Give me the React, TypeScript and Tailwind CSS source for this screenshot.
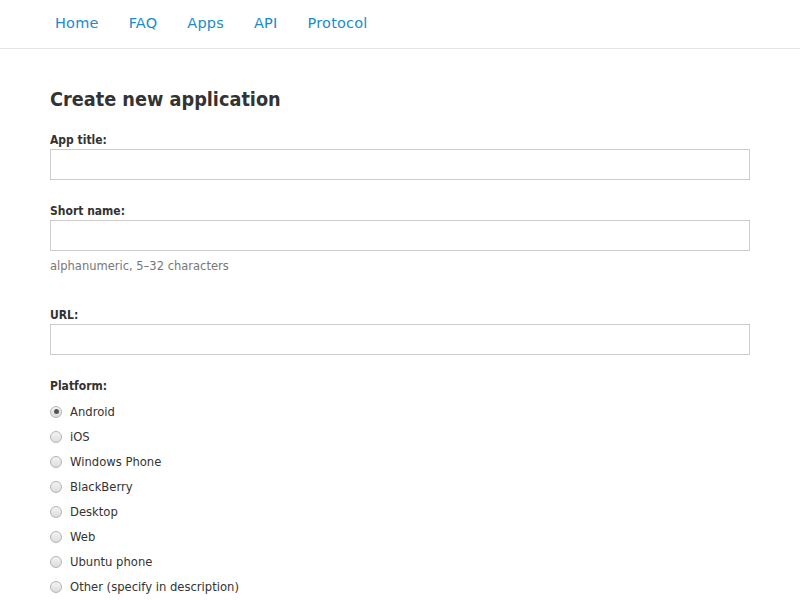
import React from "react";

const platforms = [
  "Android",
  "iOS",
  "Windows Phone",
  "BlackBerry",
  "Desktop",
  "Web",
  "Ubuntu phone",
  "Other (specify in description)",
];

function Radio({ checked }: { checked: boolean }) {
  return (
    <span className="flex h-[12px] w-[12px] shrink-0 items-center justify-center rounded-full border border-[#b4b4b4] bg-gradient-to-b from-[#f4f4f4] to-[#dcdcdc]">
      {checked && <span className="h-[5px] w-[5px] rounded-full bg-[#555]" />}
    </span>
  );
}

const boldCond = "font-bold font-stretch-condensed";

export default function App() {
  return (
    <div className="min-h-[600px] bg-white text-[#333]" style={{ fontFamily: '"DejaVu Sans", Verdana, sans-serif' }}>
      <nav className="flex h-[49px] items-center border-b border-[#e5e5e5] pl-[40px]">
        {["Home", "FAQ", "Apps", "API", "Protocol"].map((l) => (
          <a key={l} className="px-[15px] text-[14.5px] tracking-[0.2px] text-[#1a8bcb]">
            {l}
          </a>
        ))}
      </nav>
      <main className="w-[700px] pl-[50px] box-content">
        <h1 className={`mt-[39px] text-[19.7px] leading-[24px] text-[#333] ${boldCond}`}>Create new application</h1>

        <label className={`mt-[20px] block text-[12px] leading-[16px] ${boldCond}`}>App title:</label>
        <div className="mt-[1px] h-[31px] border border-[#ccc]" />

        <label className={`mt-[23px] block text-[12px] leading-[16px] ${boldCond}`}>Short name:</label>
        <div className="mt-[1px] h-[31px] border border-[#ccc]" />
        <p className="mt-[7px] text-[11.5px] leading-[16px] text-[#777]">alphanumeric, 5–32 characters</p>

        <label className={`mt-[33px] block text-[12px] leading-[16px] ${boldCond}`}>URL:</label>
        <div className="mt-[1px] h-[31px] border border-[#ccc]" />

        <label className={`mt-[23px] block text-[12px] leading-[16px] ${boldCond}`}>Platform:</label>
        <div className="mt-[5px] flex flex-col">
          {platforms.map((p, i) => (
            <div key={p} className="flex h-[25px] items-center gap-[8px]">
              <Radio checked={i === 0} />
              <span className="text-[11.6px] leading-[16px] text-[#333]">{p}</span>
            </div>
          ))}
        </div>
      </main>
    </div>
  );
}
